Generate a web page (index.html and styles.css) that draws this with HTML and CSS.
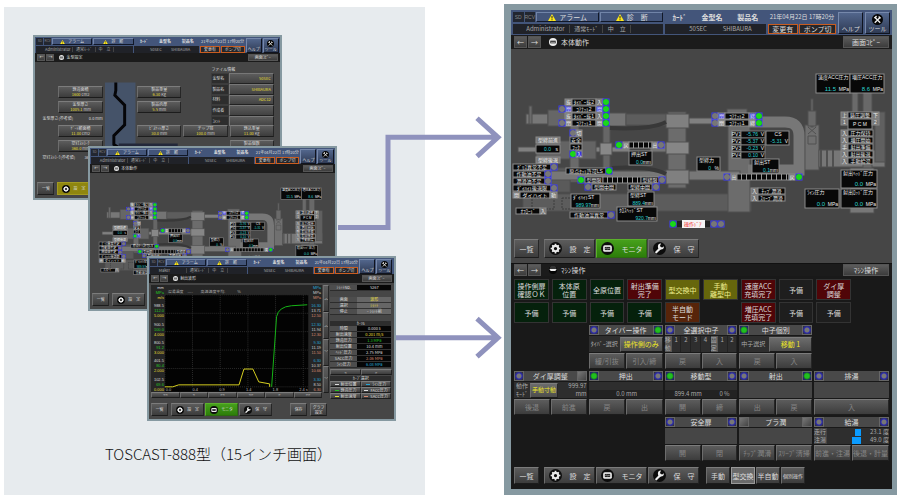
FILE: index.html
```
<!DOCTYPE html>
<html lang="ja">
<head>
  <meta charset="UTF-8" />
  <meta name="viewport" content="width=device-width, initial-scale=1.0"/>
  <title>TOSCAST-888</title>
  <link rel="stylesheet" href="styles.css">
</head>
<body>
  <!-- shared icons -->
  <svg class="defs" width="0" height="0">
    <symbol id="warn" viewBox="0 0 16 14"><path d="M8 0L16 14H0Z" fill="#ffe91a"/><path d="M7 4h2v5H7zM7 10.500h2v2H7z" fill="#222"/></symbol>
    <symbol id="gear" viewBox="0 0 24 24"><circle cx="12" cy="12" r="12" fill="#0c0c0c"/><circle cx="12" cy="12" r="5" fill="none" stroke="#e8e8e8" stroke-width="4"/><path d="M12 3v4M12 17v4M3 12h4M17 12h4M6 6l3 3M15 15l3 3M18 6l-3 3M9 15l-3 3" stroke="#e8e8e8" stroke-width="3"/></symbol>
    <symbol id="monitor" viewBox="0 0 24 24"><circle cx="12" cy="12" r="12" fill="#0c0c0c"/><rect x="4" y="6" width="16" height="12" rx="3" fill="#eee"/><rect x="7" y="9" width="10" height="6" fill="#222"/><path d="M8 13l2-2 2 2 2-2 2 2" fill="none" stroke="#eee"/></symbol>
    <symbol id="wrench" viewBox="0 0 24 24"><circle cx="12" cy="12" r="12" fill="#0c0c0c"/><path d="M6 19L13 12" stroke="#eee" stroke-width="4" stroke-linecap="round"/><path d="M20 8a5.500 5.500 0 1 1-5-5l-2 3 1 3 3 1z" fill="#eee"/></symbol>
    <symbol id="tool" viewBox="0 0 24 24"><circle cx="12" cy="12" r="12" fill="#050505"/><path d="M6 7l12 12M18 7L6 19" stroke="#eee" stroke-width="3"/><path d="M4 8l5-5 2 3-4 4zM15 4l5 5-3 1-3-3z" fill="#eee"/></symbol>
    <symbol id="dot" viewBox="0 0 24 24"><circle cx="12" cy="12" r="12" fill="#eee"/><path d="M4 8h16v8H4z" fill="#222"/><path d="M7 11h4v3H7zM13 11h4v3h-4z" fill="#eee"/></symbol>
    <symbol id="half" viewBox="0 0 24 24"><circle cx="12" cy="12" r="12" fill="#050505"/><path d="M2 9h20a10 10 0 0 0-20 0z" fill="#333"/><path d="M1 9h22l-4 6H5z" fill="#eee"/></symbol>
  </svg>

  <main class="sheet">
    <section class="old">
      <div class="desk">
        <!-- die settings -->
        <article class="screen small first">
          <div class="head" data-user="Administrator"></div>
          <div class="bar"><button>←</button><button>→</button><svg><use href="#dot"/></svg><span>金型設定</span><button class="copy">画面ｺﾋﾟｰ</button></div>
          <div class="settings">
            <table class="file">
              <caption>ファイル情報</caption>
              <tr><th>金型名</th><td>50SEC</td></tr>
              <tr><th>製品名</th><td>SHIBAURA</td></tr>
              <tr><th>材料</th><td>ADC12</td></tr>
              <tr><th>作成者</th><td></td></tr>
              <tr><th>ｺﾒﾝﾄ</th><td></td></tr>
            </table>
            <svg class="die" viewBox="0 0 31 96">
              <path d="M0 15h31v81H0z" fill="#455369"/>
              <path d="M11 15v8l-1 5 10 10v20l-11 11v9l5 3h70v5H12" fill="none" stroke="#050508" stroke-width="3"/>
              <path d="M14 77h60v4H14z" fill="#23283a"/>
            </svg>
            <button class="c1 r2">鋳造面積<b>1600 <i>cm2</i></b></button>
            <button class="c1 r3">金型厚さ<b>1005.1 <i>mm</i></b></button>
            <p class="r4"><span>金型厚さ(参考値)</span><span>0.0 mm</span></p>
            <button class="c1 r5">ｹﾞｰﾄ断面積<b>11.00 <i>cm2</i></b></button>
            <button class="c1 r6">空打ｽﾄﾛｰｸ<b>360.0 <i>mm</i></b></button>
            <p class="r7"><span>空打ｽﾄﾛｰｸ(参考値)</span><span>360.0 mm</span></p>
            <button class="c3 r2">製品重量<b>6.30 <i>Kg</i></b></button>
            <button class="c3 r3">製品肉厚<b>5.5 <i>mm</i></b></button>
            <button class="c3 r5">ﾋﾞｽｹｯﾄ厚さ<b>30.0 <i>mm</i></b></button>
            <button class="c4 r5">チップ径<b>100.0 <i>mm</i></b></button>
            <button class="c5 r5">鋳込重量<b>11.00 <i>Kg</i></b></button>
            <button class="c5 r6">製品個数<b>1</b></button>
          </div>
          <nav><button class="list">一覧</button><button class="yellow"><svg><use href="#gear"/></svg>設　定</button></nav>
        </article>

        <!-- machine monitor -->
        <article class="screen small second">
          <div class="head" data-user="Administrator"></div>
          <div class="bar"><button>←</button><button>→</button><svg><use href="#dot"/></svg><span>本体動作</span><button class="copy">画面ｺﾋﾟｰ</button></div>
          <svg class="machine" viewBox="511 49 381 200"><use href="#machine"/></svg>
          <nav><button class="list">一覧</button><button><svg><use href="#gear"/></svg>設　定</button></nav>
        </article>

        <!-- injection waveform -->
        <article class="screen small third">
          <div class="head" data-user="Maker"></div>
          <div class="bar"><button>←</button><button>→</button><svg><use href="#dot"/></svg><span>射出波形</span><button class="copy">画面ｺﾋﾟｰ</button></div>
          <div class="wave">
            <div class="graph">
              <svg id="chart" viewBox="0 0 173 108"></svg>
              <div class="steps"><button>&lt;&lt;</button><button>&lt;</button><button>&gt;&lt;</button><button>&lt;&gt;</button><button>&gt;</button><button>&gt;&gt;</button></div>
            </div>
            <div class="scroll"><button>︿</button><button>︿</button><button>﹀</button><button>﹀</button></div>
            <div class="values">
              <table>
                <tr><th>ｼｮｯﾄNo.</th><td>5267</td></tr>
              </table>
              <table class="keys">
                <tr><th>画面</th><td class="y">波形</td></tr>
                <tr><th>選択</th><td class="y">ｼｮｯﾄ</td></tr>
                <tr><th>停止</th><td>ｰ ｼｮｯﾄ前</td></tr>
              </table>
              <table class="data">
                <caption>ｶｰｿﾙ</caption>
                <tr><th>時間</th><td>0.000 s</td></tr>
                <tr><th>射出速度</th><td class="y">0.201 m/s</td></tr>
                <tr><th>鋳造圧力</th><td class="g">1.3 MPa</td></tr>
                <tr><th>射出位置</th><td>10.4 mm</td></tr>
                <tr><th>ﾍｯﾄﾞ圧力</th><td>2.75 MPa</td></tr>
                <tr><th>SACC圧力</th><td class="o">2.06 MPa</td></tr>
                <tr><th>ﾗｲﾝ圧力</th><td class="c">6.08 MPa</td></tr>
              </table>
              <div class="steps"><button>&lt;</button><button>&gt;</button></div>
              <div class="legend">
                <h4>ｶｰﾌﾞ選択</h4>
                <button><i></i>射出位置</button><button class="c"><i></i>ﾗｲﾝ圧力</button>
                <button class="g"><i></i>鋳造圧力</button><button><i></i>FACC圧力</button>
                <button class="y"><i></i>射出速度</button><button class="o"><i></i>SACC圧力</button>
              </div>
            </div>
          </div>
          <nav><button class="list">一覧</button><button><svg><use href="#gear"/></svg>設　定</button><button class="green"><svg><use href="#monitor"/></svg>モニタ</button><button><svg><use href="#wrench"/></svg>保　守</button><button class="save">保存</button><button class="save">グラフ<br>設定</button></nav>
        </article>
      </div>
      <p class="caption">TOSCAST-888型（15インチ画面）</p>
    </section>

    <!-- new tall screen -->
    <article class="screen large">
      <div class="head" data-user="Administrator"></div>
      <div class="bar"><button>←</button><button>→</button><svg><use href="#dot"/></svg><span>本体動作</span><button class="copy">画面ｺﾋﾟｰ</button></div>
      <svg class="machine" viewBox="511 49 381 190"><g id="machine"></g></svg>
      <nav><button class="list">一覧</button><button><svg><use href="#gear"/></svg>設　定</button><button class="green"><svg><use href="#monitor"/></svg>モニタ</button><button><svg><use href="#wrench"/></svg>保　守</button></nav>

      <div class="operate">
        <div class="bar"><button>←</button><button>→</button><svg><use href="#half"/></svg><span>ﾏｼﾝ操作</span><button class="copy">ﾏｼﾝ操作</button></div>
        <div class="states">
          <div class="ok">操作側扉<br>確認ＯＫ</div>
          <div class="ok">本体原<br>位置</div>
          <div class="ok">全原位置</div>
          <div class="ng">射出準備<br>完了</div>
          <div class="run">型交換中</div>
          <div class="run">手動<br>離型中</div>
          <div class="ng">速度ACC<br>充填完了</div>
          <div>予備</div>
          <div class="ng">ダイ厚<br>調整</div>
          <div class="ok start">予備</div>
          <div class="ok">予備</div>
          <div class="ok">予備</div>
          <div class="ok">予備</div>
          <div class="semi">半自動<br>モード</div>
          <div class="ng seventh">増圧ACC<br>充填完了</div>
          <div>予備</div>
          <div>予備</div>
        </div>

        <div class="modules">
          <section class="module col2">
            <header><i class="lamp"></i><h3>タイバー操作</h3><i class="lamp on"></i></header>
            <div class="info"><span>ﾀｲﾊﾞｰ選択</span><button class="pick">操作側のみ</button></div>
            <div class="pair"><button>緩/引抜</button><button>引入/締</button></div>
          </section>
          <section class="module">
            <header><i class="lamp"></i><h3>全選択中子</h3><i class="lamp"></i></header>
            <div class="info cores"><b>移<br>動</b><span>1</span><span>2</span><span>3</span><span>4</span><b>固<br>定</b><span>1</span><span>2</span></div>
            <div class="pair"><button>戻</button><button>入</button></div>
          </section>
          <section class="module">
            <header><i class="lamp on"></i><h3>中子個別</h3><i class="lamp"></i></header>
            <div class="info"><span>中子選択</span><button class="pick">移動 1</button></div>
            <div class="pair"><button>戻</button><button>入</button></div>
          </section>

          <section class="module col1">
            <header><i class="lamp"></i><h3>ダイ厚調整</h3><i class="lamp none"></i></header>
            <div class="info"><span>動作<br>ﾓｰﾄﾞ</span><button class="pick">手動寸動</button><span class="num">999.97<br>mm</span></div>
            <div class="pair"><button>後退</button><button>前進</button></div>
          </section>
          <section class="module">
            <header><i class="lamp on"></i><h3>押出</h3><i class="lamp"></i></header>
            <div class="info lines"><span>0.0 mm</span></div>
            <div class="pair"><button>戻</button><button>出</button></div>
          </section>
          <section class="module">
            <header><i class="lamp on"></i><h3>移動型</h3><i class="lamp"></i></header>
            <div class="info lines"><span>899.4 mm</span><span>0 %</span></div>
            <div class="pair"><button>開</button><button>締</button></div>
          </section>
          <section class="module">
            <header><i class="lamp"></i><h3>射出</h3><i class="lamp on"></i></header>
            <div class="info plain"></div>
            <div class="pair"><button>出</button><button>戻</button></div>
          </section>
          <section class="module">
            <header><i class="lamp"></i><h3>排湯</h3><i class="lamp"></i></header>
            <div class="info plain"></div>
            <div class="pair"><button>入</button></div>
          </section>

          <section class="module col3">
            <header><i class="lamp"></i><h3>安全扉</h3><i class="lamp"></i></header>
            <div class="info plain"></div>
            <div class="pair"><button>開</button><button>閉</button></div>
          </section>
          <section class="module">
            <header><i class="lamp none"></i><h3>プラ潤</h3><i class="lamp none"></i></header>
            <div class="info plain"></div>
            <div class="pair"><button>ﾁｯﾌﾟ潤滑</button><button>ｽﾘｰﾌﾞ清掃</button></div>
          </section>
          <section class="module">
            <header><i class="lamp"></i><h3>給湯</h3><i class="lamp"></i></header>
            <div class="info ladle"><b>走行</b><i class="pos one"></i><span>23.1 度</span><b>注湯</b><i class="pos two"></i><span>49.0 度</span></div>
            <div class="pair"><button>前進・注湯</button><button>後退・計量</button></div>
          </section>
        </div>
        <nav><button class="list">一覧</button><button><svg><use href="#gear"/></svg>設　定</button><button><svg><use href="#monitor"/></svg>モニタ</button><button><svg><use href="#wrench"/></svg>保　守</button><div class="modes"><button>手動</button><button class="on">型交換</button><button>半自動</button><button class="tiny">個別操作</button></div></nav>
      </div>
    </article>

    <svg class="arrows" viewBox="0 0 900 497" preserveAspectRatio="none">
      <path d="M338 227H388V137H498M396 337H498M477 118L498 137L477 156M477 318L498 337L477 356"/>
    </svg>
  </main>

  <script src="script.js"></script>
</body>
</html>
```
FILE: styles.css
```
* {
  box-sizing: border-box;
}

body {
  margin: 0;
  background: #fff;
  font-family: "Noto Sans CJK JP", sans-serif;
  color: #ddd;
}

button {
  font: inherit;
  color: inherit;
  padding: 0;
  margin: 0;
  border: 1px solid;
  border-color: #7c7c7c #262626 #1c1c1c #6c6c6c;
  background: linear-gradient(#5c5c5c, #3c3c3c);
  display: flex;
  align-items: center;
  justify-content: center;
  white-space: nowrap;
  overflow: hidden;
  cursor: pointer;
}

p, h3, h4 {
  margin: 0;
  font-weight: normal;
}

i {
  font-style: normal;
}

.defs {
  position: absolute;
}

.sheet {
  position: relative;
  display: grid;
  grid-template-columns: 421fr 393fr;
  gap: 79px;
  padding: 4px 3px 3px 4px;
}

.old {
  background: #e7ebee;
  margin: 3px 0 0;
  display: flex;
  flex-direction: column;
}

.desk {
  position: relative;
  height: 431px;
}

.caption {
  text-align: center;
  color: #111;
  font-size: 15px;
  font-weight: 300;
  line-height: 32px;
  padding-left: 8px;
}

.arrows {
  position: absolute;
  left: 0;
  top: 0;
  width: 100%;
  height: 100%;
  pointer-events: none;
}

.arrows path {
  fill: none;
  stroke: #8f92bd;
  stroke-width: 5;
}

/* screen frame */
.screen {
  background: #464646;
  border: 6px solid #8699a1;
  border-width: 6px 5px 6px 7px;
  font-size: 7px;
  line-height: 8px;
  display: flex;
  flex-direction: column;
  overflow: hidden;
}

.small {
  position: absolute;
  width: 59%;
  height: 165px;
  border-width: 2px;
  font-size: 4px;
  line-height: 5px;
}

.first {
  left: 7%;
  top: 28px;
}

.second {
  left: 20%;
  top: 139px;
}

.third {
  left: 34%;
  top: 249px;
}

/* blue head */
.head {
  display: grid;
  grid-template-columns: 151fr 101fr 69fr 25fr 25fr;
  grid-template-rows: 1fr 1fr;
  gap: 2px;
  height: 25px;
  flex: none;
  padding: 2px;
  background: #43557a;
}

.small .head {
  height: 16px;
  gap: 1px;
  padding: 1px;
}

.head > * {
  display: flex;
  align-items: center;
  min-width: 0;
  white-space: nowrap;
}

.alarm {
  gap: 1px;
}

.alarm button {
  flex: 1;
  height: 100%;
  gap: 3px;
  background: #43557a;
  border-color: #7184a8 #111828 #111828 #7184a8;
}

.alarm svg {
  width: 8px;
  height: 7px;
}

.small .alarm svg {
  width: 5px;
  height: 4px;
}

.alarm span {
  width: 7%;
  height: 100%;
  background: #222630;
  color: #858585;
  font-family: "Liberation Sans", sans-serif;
  font-size: 5px;
  display: flex;
  align-items: center;
  justify-content: center;
}

.small .alarm span {
  font-size: 3px;
}

.names {
  justify-content: space-around;
  font-weight: bold;
}

.date {
  font-size: 6px;
  justify-content: center;
}

.small .date {
  font-size: 4px;
}

.who, .job {
  background: #202228;
  color: #aaa;
  font-size: 6px;
}

.small .who, .small .job {
  font-size: 4px;
}

.who {
  padding-left: 6%;
}

.who span {
  border-right: 1px solid #444;
  padding: 0 3%;
}

.who span:first-child {
  width: 34%;
}

.job {
  justify-content: space-between;
  padding: 0 14% 0 24%;
}

.flags {
  gap: 1px;
}

.flags span {
  flex: 4;
  height: 100%;
  border: 1px solid #c95c20;
  background: #26262a;
  display: flex;
  align-items: center;
  justify-content: center;
}

.flags span + span {
  flex: 5;
}

.head .help {
  grid-row: 1 / 3;
  flex-direction: column;
  justify-content: flex-end;
  background: linear-gradient(#52668c, #2f3b55);
  border-color: #7688ab #10141f #10141f #7688ab;
  font-size: 6px;
}

.help.h1 {
  grid-column: 4;
}

.help.h2 {
  grid-column: 5;
}

.head .help svg {
  width: 11px;
  height: 11px;
}

.small .head .help {
  font-size: 4px;
}

.small .head .help svg {
  width: 7px;
  height: 7px;
}

/* title bar */
.bar {
  display: flex;
  align-items: stretch;
  gap: 1px;
  flex: none;
  height: 14px;
  padding: 1px 3px;
  background: #1b1b1b;
}

.bar button {
  width: 13px;
  border-color: #555;
}

.bar svg {
  width: 8px;
  height: 8px;
  margin: 2px 3px 0 7px;
}

.bar span {
  align-self: center;
}

.bar .copy {
  width: 46px;
  margin-left: auto;
}

.small .bar {
  height: 9px;
  padding: 1px 2px;
}

.small .bar button {
  width: 8px;
}

.small .bar svg {
  width: 5px;
  height: 5px;
  margin: 1px 1px 0 4px;
}

.small .bar .copy {
  width: 30px;
}

.machine {
  display: block;
  width: 100%;
}

#machine text {
  font-family: "Liberation Sans", "Noto Sans CJK JP", sans-serif;
  font-size: 5px;
  fill: #eee;
}

#machine .value {
  fill: #2ad0d0;
}

#machine .big {
  font-size: 6px;
}

#machine .alert {
  fill: #f02020;
}

/* bottom buttons */
nav {
  display: flex;
  gap: 1px;
  height: 24px;
  padding: 0 3px 5px;
}

nav button {
  width: 51px;
  gap: 8px;
}

nav button svg {
  width: 13px;
  height: 13px;
}

nav .list {
  width: 25px;
  margin-right: 4px;
}

nav .green {
  background: linear-gradient(#46a01c, #2d7d0a);
  border-color: #5cb02c #2c6a10 #2c6a10 #5cb02c;
}

nav .yellow {
  background: #8f860f;
  border-color: #a39a22;
}

.small nav {
  margin-top: auto;
  height: 16px;
  padding: 0 3px 3px 2px;
  flex: none;
}

.small nav button {
  width: 33px;
  gap: 3px;
}

.small nav .list, .small nav .save {
  width: 17px;
  margin-right: 2px;
}

.small nav .list + button + button + button + .save {
  margin-left: 17px;
}

.small nav button svg {
  width: 8px;
  height: 8px;
}

/* die settings */
.settings {
  display: grid;
  grid-template-columns: 45fr 31fr 45fr 45fr 45fr;
  grid-template-rows: 17px 12px 12px 6px 12px 12px 6px;
  gap: 3px 2px;
  padding: 4px 6px 0 23px;
}

.settings button {
  flex-direction: column;
  line-height: 5px;
}

.settings b, .settings td {
  color: #e6df35;
  font-weight: normal;
}

.settings b i {
  color: #ccc;
}

.settings p {
  grid-column: 1;
  margin-left: -16px;
  display: flex;
  justify-content: space-between;
  white-space: nowrap;
  overflow: hidden;
}

.c1 { grid-column: 1; }
.c3 { grid-column: 3; }
.c4 { grid-column: 4; }
.c5 { grid-column: 5; }
.r2 { grid-row: 2; }
.r3 { grid-row: 3; }
.r4 { grid-row: 4; }
.r5 { grid-row: 5; }
.r6 { grid-row: 6; }
.r7 { grid-row: 7; }

.die {
  grid-area: 1 / 2 / 8 / 3;
  width: 100%;
  height: 98px;
  overflow: visible;
}

.file {
  grid-area: 1 / 4 / 5 / 6;
  margin-left: 28px;
  border-spacing: 0;
  height: 54px;
}

.file caption {
  text-align: left;
  line-height: 7px;
}

.file th {
  font-weight: normal;
  text-align: left;
  width: 18px;
  padding: 0;
  background: #2d2d2d;
  border: 1px solid #3c3c3c;
}

.file td {
  text-align: right;
  padding: 0 2px;
  background: linear-gradient(#5c5c5c, #424242);
  border: 1px solid;
  border-color: #777 #222 #222 #777;
}

/* waveform */
.wave {
  display: grid;
  grid-template-columns: 173fr 6fr 62fr;
  gap: 1px;
  padding: 2px 2px 0;
}

#chart {
  display: block;
  width: 100%;
  background: #262626;
}

#chart text {
  font-family: "Liberation Sans", "Noto Sans CJK JP", sans-serif;
  font-size: 4px;
}

.steps {
  display: flex;
}

.steps button {
  flex: 1;
  height: 6px;
}

.scroll {
  display: flex;
  flex-direction: column;
  height: 108px;
}

.scroll button {
  flex: 1;
}

.values {
  display: flex;
  flex-direction: column;
  gap: 1px;
}

.values table {
  width: 100%;
  border-spacing: 0;
  margin-bottom: 5px;
}

.values .data {
  margin: 0;
}

.values th {
  width: 44%;
  font-weight: normal;
  padding: 0;
  line-height: 5px;
  background: #4d4d4d;
  border-bottom: 1px solid #2c2c2c;
}

.values td {
  padding: 0;
  text-align: center;
  background: #060606;
  border-bottom: 1px solid #333;
}

.values .keys td {
  background: #666;
}

.values caption, .legend h4 {
  background: #2d2d2d;
  text-align: center;
}

.legend {
  display: grid;
  grid-template-columns: 1fr 1fr;
}

.legend h4 {
  grid-column: 1 / 3;
}

.legend button {
  height: 6px;
  gap: 2px;
}

.legend i {
  width: 4px;
  height: 1px;
  background: #ddd;
}

.values .y { color: #e6df35; }
.values .g { color: #22c522; }
.values .c { color: #25a5d5; }
.values .o { color: #d58a70; }
.values .legend button { color: #ddd; }
.legend .y i { background: #e6df35; }
.legend .g i { background: #22c522; }
.legend .c i { background: #25a5d5; }
.legend .o i { background: #d58a70; }

/* machine operation */
.operate {
  background: #191919;
  flex: 1;
}

.operate .bar {
  height: 13px;
  border-top: 1px solid #111;
  padding: 0 3px;
}

.states {
  display: grid;
  grid-template-columns: repeat(10, 1fr);
  grid-auto-rows: 21px;
  gap: 2px 3px;
  padding: 3px 3px 2px;
}

.states div {
  display: flex;
  align-items: center;
  justify-content: center;
  text-align: center;
  line-height: 8px;
  white-space: nowrap;
  background: #1e1e1e;
  border: 1px solid #333;
}

.states .ok { background: #05210c; }
.states .ng { background: #500508; }
.states .run { background: #66660c; color: #eeee90; }
.states .semi { background: #57240a; }
.states .start { grid-column: 1; }
.states .seventh { grid-column: 7; }

.modules {
  display: grid;
  grid-template-columns: repeat(5, 1fr);
  gap: 2px;
  padding: 0 3px;
}

.module {
  display: grid;
  grid-template-rows: 10px 16px 16px;
  gap: 1px;
}

.col1 { grid-column: 1; }
.col2 { grid-column: 2; }
.col3 { grid-column: 3; }

.module header {
  display: flex;
  background: #494949;
}

.module h3 {
  flex: 1;
  text-align: center;
  font-size: 7px;
  line-height: 10px;
}

.lamp {
  width: 10px;
  border: 1px solid #666;
  background: radial-gradient(circle, #777 0 2px, #2a2ab0 3px, #333 5px);
}

.lamp.on {
  background: radial-gradient(circle, #20c020 0 2px, #1c8c1c 3px, #24246a 4px);
}

.lamp.none {
  background: linear-gradient(135deg, #777, #444);
}

.info {
  display: flex;
  align-items: center;
  gap: 2px;
  background: #2e2e2e;
  color: #aaa;
  white-space: nowrap;
  font-size: 6px;
  line-height: 8px;
  padding-left: 2px;
}

.plain {
  background: #464646;
}

.pick {
  margin-left: auto;
  width: 43px;
  height: 15px;
  color: #eee527;
  font-size: 7px;
  background: linear-gradient(#6c6c6c, #4c4c4c);
}

.col1 .pick {
  width: 28px;
  font-size: 6px;
  margin: 0;
}

.num {
  flex: 1;
  text-align: right;
}

.cores {
  display: grid;
  grid-template-columns: 7px repeat(4, 1fr) 7px repeat(2, 1fr);
  gap: 0;
  padding: 0;
  align-items: stretch;
}

.cores b {
  font-weight: normal;
  background: #555;
}

.cores span {
  border: 1px solid #222;
  border-width: 0 1px 0 0;
  text-align: center;
}

.lines {
  align-items: flex-end;
  justify-content: space-around;
  background: linear-gradient(#2e2e2e 50%, #222 50%);
}

.pair {
  display: flex;
  gap: 1px;
}

.pair button {
  flex: 1;
  color: #868686;
}

.ladle {
  display: grid;
  grid-template-columns: 13px 1fr 27px;
  gap: 0 1px;
  padding: 0;
}

.ladle b {
  font-weight: normal;
  background: #444;
}

.ladle span {
  text-align: right;
}

.pos {
  height: 7px;
  background: #0b9bff;
  justify-self: end;
}

.one {
  width: 6px;
}

.two {
  width: 9px;
}

.operate nav {
  height: 28px;
  padding: 6px 3px 5px;
}

.modes {
  display: flex;
  gap: 1px;
  margin-left: 6px;
}

.modes button {
  width: 24px;
}

.modes .on {
  background: #6a6a6a;
  border-color: #999;
}

.modes .tiny {
  font-size: 5px;
}
```
FILE: script.js
```
// blue head shared by every screen
document.querySelectorAll(".head").forEach(head => {
  head.innerHTML = `
    <div class="alarm"><span>SD</span><span>RCV</span>
      <button><svg><use href="#warn"/></svg>アラーム</button>
      <button><svg><use href="#warn"/></svg>診　断</button></div>
    <div class="names"><span>ｶｰﾄﾞ</span><span>金型名</span><span>製品名</span></div>
    <div class="date">21年04月22日 17時20分</div>
    <button class="help h1">ヘルプ</button>
    <button class="help h2"><svg><use href="#tool"/></svg>ツール</button>
    <div class="who"><span>${head.dataset.user}</span><span>通常ﾓｰﾄﾞ</span><span>中　立</span></div>
    <div class="job"><span>50SEC</span><span>SHIBAURA</span></div>
    <div class="flags"><span>変更有</span><span>ポンプ切</span></div>`;
});

function rect(x, y, w, h, fill, stroke) {
  return `<rect x="${x}" y="${y}" width="${w}" height="${h}" fill="${fill}" stroke="${stroke || "none"}"/>`;
}

function text(x, y, str, cls, anchor) {
  return `<text x="${x}" y="${y}" text-anchor="${anchor || "start"}" class="${cls || ""}">${str}</text>`;
}

// one line label, black unless a colour is given
function tag(x, y, w, str, fill) {
  return rect(x, y, w, 6, fill || "#080808", "#8a8a8a") + text(x + w / 2, y + 5, str, "", "middle");
}

function lamp(x, y, on) {
  return rect(x, y, 6, 6, "#22225c", "#3c3cff") + `<circle cx="${x + 3}" cy="${y + 3}" r="3" fill="${on ? "#19d819" : "#777"}"/>`;
}

// label with a value and unit below it
function meter(x, y, w, h, str, value, unit) {
  const big = h > 17 ? " big" : "";
  const base = big ? y + h - 2 : y + h - 1;
  return rect(x, y, w, h, "#080808", "#8a8a8a") + text(x + 2, y + 5, str) +
    text(x + w - (unit.length > 2 ? 14 : 9), base, value, "value" + big, "end") + text(x + w - 1, base, unit, "", "end");
}

function ladder(x, y, w) {
  let out = rect(x, y, w, 6, "#080808", "#8a8a8a");
  for (let i = x + 4; i < x + w; i += 5) out += rect(i, y, 1, 6, "#999");
  return out;
}

const body = [
  [523, 194, 228, 17, "#5c5c5c"], [728, 118, 22, 94, "#6c6c6c"],
  [526, 114, 22, 10, "#777"], [529, 106, 3, 18, "#6a6a6a"], [548, 110, 30, 16, "#666"], [578, 113, 48, 13, "#747474"],
  [626, 114, 42, 11, "#5d5d5d"], [688, 118, 60, 6, "#808080"], [518, 147, 112, 5, "#808080"], [536, 141, 60, 18, "#646464"],
  [570, 122, 9, 60, "#6a6a6a"], [603, 126, 7, 44, "#666"], [600, 143, 12, 12, "#888"], [650, 143, 22, 9, "#747474"],
  [520, 168, 50, 24, "#5a5a5a"], [545, 171, 195, 9, "#777"], [668, 112, 18, 76, "#6c6c6c"], [666, 114, 23, 14, "#808080"],
  [666, 142, 23, 12, "#868686"], [666, 170, 23, 14, "#808080"], [805, 125, 14, 45, "#707070"], [819, 150, 66, 17, "#777"],
  [811, 99, 2, 28, "#6a6a6a"], [808, 111, 8, 15, "#6a6a6a"], [852, 88, 6, 24, "#6a6a6a"], [863, 92, 9, 80, "#686868"],
  [875, 112, 10, 50, "#606060"], [850, 168, 24, 45, "#777"], [727, 109, 20, 6, "#6a6a6a"]
];

let m = body.map(b => rect(...b, "#505050")).join("");
m += `<path d="M748 122H785Q799 122 799 136V170H748" fill="none" stroke="#777" stroke-width="11"/>
  <path d="M610 128Q650 130 666 122M612 168Q650 166 666 174" fill="none" stroke="#383838" stroke-width="4"/>
  <path d="M821 150v17M827 150v17M833 150v17" stroke="#505050" stroke-width="2"/>
  <path d="M532 198h22v11h-22zM562 198h18v11h-18z" fill="none" stroke="#3c3c3c" stroke-dasharray="2 1"/>
  <path d="M808 127l8 7M816 127l-8 7M808 136h8v8h-8z" fill="none" stroke="#505050"/>`;

["ﾀｲﾊﾞｰ抜2", "ｺｱﾅｯﾄ2", "ﾀｲﾊﾞｰ抜1", "ｺｱﾅｯﾄ1"].forEach((name, i) => {
  const y = 99 + i * 7;
  m += tag(565, y, 7, i % 2 ? "閉" : "抜", i === 1 ? "#3333e0" : "#777") + tag(572, y, 24, name) +
    tag(596, y, 7, i % 2 ? "開" : "入", i === 1 ? "#3333e0" : "#777") + lamp(603, y, true);
  if (i % 2) m += lamp(559, y);
});
[113, 120].forEach((y, i) => {
  const fill = i ? "#888" : "#3333e0";
  m += lamp(712, y) + tag(718, y, 7, "閉", fill) + tag(725, y, 24, "ｺｱﾅｯﾄ" + (2 - i)) + tag(749, y, 7, "締", fill) + lamp(756, y, true);
});

m += lamp(570, 130) + tag(576, 130, 6, "切", "#777") + tag(570, 137, 12, "安全") + tag(570, 144, 12, "ﾌｯｸ") + lamp(570, 151, true) + tag(576, 151, 6, "入", "#3333e0");
m += tag(536, 137, 24, "型締前進", "#777") + rect(536, 145, 24, 8, "#080808", "#8a8a8a") + text(551, 151, "0.0", "value", "end") + text(558, 151, "s", "", "end") + tag(536, 157, 24, "型締後退", "#777");
m += lamp(616, 142, true) + tag(623, 142, 6, "戻", "#777") + ladder(629, 142, 23) + tag(652, 142, 6, "出", "#777") + lamp(658, 142);
m += meter(629, 151, 23, 14, "押出ST", "0.0", "mm");
["ｸﾞﾘｽ異常不足", "作動油不足", "潤滑油不足", "ﾀﾞｲﾊｲﾄ後退限"].forEach((name, i) => {
  const w = i % 3 ? 32 : 38;
  m += tag(513, 164 + i * 7, w, name) + lamp(513 + w, 164 + i * 7);
});
m += tag(513, 192, 7, "開", "#777") + tag(520, 192, 30, "ダイハイト") + tag(550, 192, 7, "動", "#777");
m += tag(566, 168, 40, "原点ｾｯﾄ許可LS") + lamp(606, 168, true);
m += lamp(578, 177, true) + tag(585, 177, 18, "型開限") + ladder(603, 177, 38) + tag(641, 177, 18, "型締限") + lamp(659, 177);
m += lamp(585, 184) + tag(592, 184, 24, "型開中間") + tag(628, 184, 24, "型締中間") + lamp(653, 184);
m += meter(571, 194, 29, 14, "ﾀﾞｲﾊｲﾄST", "989.97", "mm") + meter(628, 192, 26, 14, "型締ST", "889.4", "mm") + meter(617, 207, 40, 14, "ｸﾛｽﾍｯﾄﾞST", "920.7", "mm");
m += tag(570, 212, 38, "作動油温異常") + lamp(608, 212) + tag(516, 208, 24, "ｵﾌﾛｰﾄﾞ") + tag(540, 208, 6, "入", "#777");
m += lamp(670, 221, true) + rect(677, 221, 5, 6, "#222") + rect(682, 220, 23, 8, "#f4f4f4") + text(684, 226, "操作ﾄﾞｱ", "alert") + rect(705, 221, 5, 6, "#222") + lamp(711, 221) + lamp(718, 221);
m += meter(697, 157, 23, 14, "型締力", "0", "%");
["-5.76", "-5.37", "-0.23", "0.10"].forEach((v, i) => {
  m += tag(732, 131 + i * 7, 9, "PV" + (i + 1)) + rect(741, 131 + i * 7, 24, 7, "#080808", "#777") + text(758, 136 + i * 7, v, "value", "end") + text(764, 136 + i * 7, "V", "", "end");
});
m += rect(766, 131, 23, 14, "#080808", "#8a8a8a") + text(778, 136, "CS", "", "middle") + text(782, 143, "-5.31", "value", "end") + text(788, 143, "V", "", "end");
m += meter(752, 159, 27, 14, "射出ST", "0.1", "mm");
m += lamp(724, 174) + tag(731, 174, 6, "出", "#777") + ladder(737, 174, 52) + tag(789, 174, 6, "戻", "#777") + lamp(796, 174, true);
m += tag(751, 188, 7, "入", "#777") + tag(758, 188, 27, "ﾁｯﾌﾟ潤滑") + tag(751, 195, 7, "入", "#777") + tag(758, 195, 27, "ｽﾘｰﾌﾞ潤滑");
m += meter(805, 189, 34, 19, "ﾗｲﾝ圧力", "0.0", "MPa") + meter(841, 170, 36, 18, "射出ﾍｯﾄﾞ圧力", "0.0", "MPa") + meter(841, 189, 36, 19, "射出ﾛｯﾄﾞ圧力", "0.0", "MPa");
m += meter(816, 74, 34, 19, "速度ACC圧力", "11.5", "MPa") + meter(850, 74, 34, 19, "増圧ACC圧力", "8.6", "MPa");
m += tag(841, 112, 7, "上", "#777") + tag(848, 112, 24, "鋳圧調整") + tag(872, 112, 7, "下", "#777") + tag(841, 119, 7, "1", "#777") + rect(848, 119, 24, 10, "#080808", "#8a8a8a") + text(860, 126, "P C M", "", "middle") + tag(872, 119, 7, "2", "#777");
["圧力保持", "増圧開始", "射出準備", "射出後退", "手動給湯"].forEach((name, i) => {
  m += tag(841, 130 + i * 7, 7, i === 2 ? "手" : "入", "#777") + tag(848, 130 + i * 7, 25, name);
});
document.getElementById("machine").innerHTML = m;

// waveform graph
function mark(x, y, str, fill, anchor) {
  return `<text x="${x}" y="${y}" fill="${fill}" text-anchor="${anchor || "start"}">${str}</text>`;
}

let c = rect(14, 10, 145, 98, "#030303");
for (let i = 0; i < 6; i++) {
  c += `<path d="M14 ${10 + i * 18.6}H159M${14 + i * 28} 10V103" stroke="#2d2d2d" stroke-dasharray="1 1"/>`;
}
const left = [["mm", "MPa", "m/s"], ["988.5", "112.0", "5.000"], ["900.5", "100.0", "4.000"], ["800.5", "91.2", "3.000"], ["401.5", "80.4", "2.000"], ["102.5", "69.6", "0.000"]];
const right = [["MPa", "MPa", "MPa"], ["16.30", "13.71", "12.50"], ["12.30", "11.94", "12.30"], ["9.30", "11.19", "11.50"], ["6.30", "10.37", "10.66"], ["3.30", "8.50", "6.30"]];
left.forEach((group, i) => {
  const y = 4 + i * 18.6;
  group.forEach((v, j) => {
    c += mark(13, y + j * 5, v, ["#ddd", "#22c522", "#e6df35"][j], "end");
    c += mark(172, y + j * 5, right[i][j], ["#25a5d5", "#ccc", "#d58a70"][j], "end");
  });
});
c += mark(17, 8, "溶湯温度　----　　高速速度平均.　　　%", "#aaa");
["0.0", "0.4", "0.9", "1.4", "1.8", "2.4 s"].forEach((v, i) => c += mark(15 + i * 27, 107, v, "#bbb"));
c += `<path d="M14 103H22L28 101H89L94 85H103L109 98L120 100V103" fill="none" stroke="#d8d020"/>
  <path d="M122 103L124 75L127 32Q129 22 142 21L158 20" fill="none" stroke="#16b516"/>`;
document.getElementById("chart").innerHTML = c;
```
